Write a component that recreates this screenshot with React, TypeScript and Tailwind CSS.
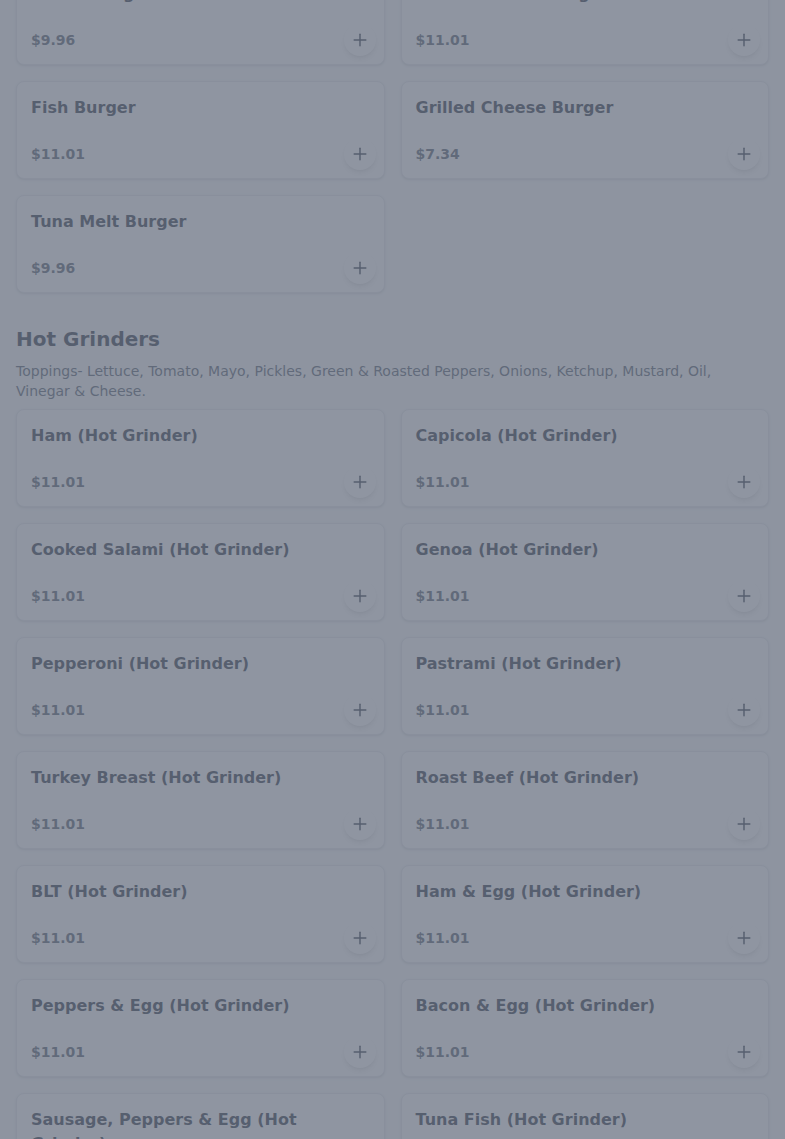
import { Plus } from "lucide-react";

type Item = { name: string; price: string };

const burgers: Item[] = [
  { name: "Bacon Burger", price: "$9.96" },
  { name: "Bacon Cheese Burger", price: "$11.01" },
  { name: "Fish Burger", price: "$11.01" },
  { name: "Grilled Cheese Burger", price: "$7.34" },
  { name: "Tuna Melt Burger", price: "$9.96" },
];

const grinders: Item[] = [
  { name: "Ham (Hot Grinder)", price: "$11.01" },
  { name: "Capicola (Hot Grinder)", price: "$11.01" },
  { name: "Cooked Salami (Hot Grinder)", price: "$11.01" },
  { name: "Genoa (Hot Grinder)", price: "$11.01" },
  { name: "Pepperoni (Hot Grinder)", price: "$11.01" },
  { name: "Pastrami (Hot Grinder)", price: "$11.01" },
  { name: "Turkey Breast (Hot Grinder)", price: "$11.01" },
  { name: "Roast Beef (Hot Grinder)", price: "$11.01" },
  { name: "BLT (Hot Grinder)", price: "$11.01" },
  { name: "Ham & Egg (Hot Grinder)", price: "$11.01" },
  { name: "Peppers & Egg (Hot Grinder)", price: "$11.01" },
  { name: "Bacon & Egg (Hot Grinder)", price: "$11.01" },
  { name: "Sausage, Peppers & Egg (Hot Grinder)", price: "$11.01" },
  { name: "Tuna Fish (Hot Grinder)", price: "$11.01" },
];

function MenuCard({ item }: { item: Item }) {
  return (
    <div className="flex flex-col rounded-lg border border-gray-200 bg-white pl-3.5 pt-3.5 pr-2 pb-2 shadow-sm">
      <h3 className="pr-1.5 text-base font-bold leading-6 text-gray-800">
        {item.name}
      </h3>
      <div className="mt-[18px] flex items-center justify-between">
        <span className="text-sm font-bold leading-5 text-gray-600">
          {item.price}
        </span>
        <button className="flex h-8 w-8 items-center justify-center rounded-full bg-white text-gray-800 shadow-md">
          <Plus size={20} strokeWidth={1.75} />
        </button>
      </div>
    </div>
  );
}

export default function App() {
  return (
    <div className="relative min-h-screen overflow-hidden bg-gray-50 px-4 font-['DejaVu_Sans',sans-serif]">
      {/* burgers (scrolled, top row cut off) */}
      <div className="-mt-[33px] grid grid-cols-2 gap-4">
        {burgers.map((b) => (
          <MenuCard key={b.name} item={b} />
        ))}
      </div>

      {/* hot grinders */}
      <section className="mt-8">
        <h2 className="text-xl font-bold leading-7 text-gray-800">
          Hot Grinders
        </h2>
        <p className="mt-2 text-sm leading-5 text-gray-600">
          Toppings- Lettuce, Tomato, Mayo, Pickles, Green &amp; Roasted Peppers,
          Onions, Ketchup, Mustard, Oil, Vinegar &amp; Cheese.
        </p>
        <div className="mt-2 grid grid-cols-2 gap-4">
          {grinders.map((g) => (
            <MenuCard key={g.name} item={g} />
          ))}
        </div>
      </section>

      {/* modal backdrop */}
      <div className="fixed inset-0 bg-gray-500/75" />
    </div>
  );
}
